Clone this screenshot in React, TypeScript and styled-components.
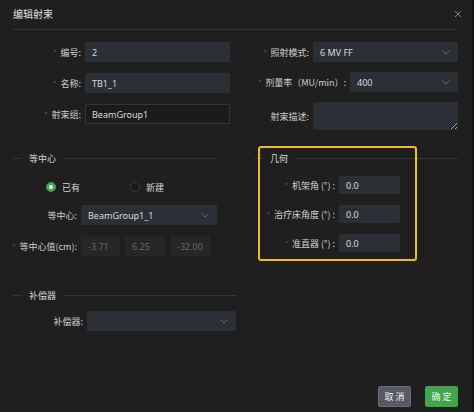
import React from "react";
import styled, { createGlobalStyle } from "styled-components";

const Global = createGlobalStyle`
  html, body { margin: 0; padding: 0; background: #1f1f1f; }
  body { font-family: "Noto Sans", "Noto Sans CJK SC", sans-serif; }
  * { box-sizing: border-box; }
`;

const Page = styled.div`
  display: flex;
  width: 474px;
  height: 412px;
`;

const Dialog = styled.div`
  position: relative;
  width: 472px;
  height: 412px;
  background: #1f1f1f;
  display: flex;
  flex-direction: column;
  color: #d4d4d4;
  font-size: 9px;
`;

const Edge = styled.div`
  width: 2px;
  background: #121212;
`;

const Header = styled.div`
  display: flex;
  align-items: center;
  justify-content: space-between;
  height: 30px;
  margin: 0 16px 0 13px;
  padding-bottom: 2px;
  border-bottom: 1px solid #343434;
`;

const Title = styled.div`
  font-size: 10px;
  color: #e0e0e0;
`;

const Close = styled.div`
  width: 8px;
  height: 8px;
  margin-right: -6px;
  display: flex;
`;

const TopGrid = styled.div`
  display: grid;
  grid-template-columns: 224px 221px;
  margin: 12px 0 0 13px;
`;

const Column = styled.div<{ $gap: number }>`
  display: flex;
  flex-direction: column;
  gap: ${(p) => p.$gap}px;
`;

const Row = styled.div<{ $labelW: number; $fieldW: number }>`
  display: grid;
  grid-template-columns: ${(p) => p.$labelW}px ${(p) => p.$fieldW}px;
  column-gap: 4px;
  align-items: center;
`;

const Label = styled.div`
  display: flex;
  justify-content: flex-end;
  align-items: center;
  color: #d0d0d0;
  white-space: nowrap;
  font-family: "Noto Sans CJK SC", sans-serif;
`;

const Star = styled.span`
  color: #c8302c;
  font-size: 7px;
  margin-right: 4px;
  flex-shrink: 0;
`;

const Field = styled.div<{ $h?: number; $variant?: "fill" | "line" | "off" }>`
  height: ${(p) => p.$h ?? 20}px;
  display: flex;
  align-items: center;
  justify-content: space-between;
  padding: 0 7px 0 6px;
  border-radius: 1px;
  background: ${(p) =>
    p.$variant === "line" ? "#1b1b1b" : p.$variant === "off" ? "#262626" : "#2b2f36"};
  border: 1px solid ${(p) => (p.$variant === "line" ? "#333638" : "transparent")};
  color: ${(p) => (p.$variant === "off" ? "#6a6a6a" : "#dcdcdc")};
  font-family: "Noto Sans", sans-serif;
  font-size: 9px;
`;

const Area = styled.textarea`
  height: 28px;
  width: 145px;
  background: #2b2f36;
  border: none;
  border-radius: 1px;
  margin: 0;
  outline: none;
  resize: vertical;
  display: block;
`;

const Middle = styled.div`
  display: grid;
  grid-template-columns: 204px 204px;
  column-gap: 37px;
  margin: 21px 0 0 13px;
`;

const Section = styled.div`
  position: relative;
  display: flex;
  flex-direction: column;
`;

const SectionTitle = styled.div`
  display: flex;
  align-items: center;
  height: 14px;
  gap: 7px;
  color: #d8d8d8;
  font-family: "Noto Sans CJK SC", sans-serif;
  &::before {
    content: "";
    width: 9px;
    height: 1px;
    background: #353535;
  }
  &::after {
    content: "";
    flex: 1;
    height: 1px;
    background: #353535;
  }
`;

const Stack = styled.div<{ $gap: number; $top: number }>`
  display: flex;
  flex-direction: column;
  gap: ${(p) => p.$gap}px;
  margin-top: ${(p) => p.$top}px;
`;

const Radios = styled.div`
  display: flex;
  align-items: center;
  height: 14px;
  padding-left: 33px;
  gap: 50px;
`;

const Radio = styled.label`
  display: flex;
  align-items: center;
  gap: 6px;
  font-family: "Noto Sans CJK SC", sans-serif;
  color: #d6d6d6;
`;

const Dot = styled.span<{ $on?: boolean }>`
  width: 10px;
  height: 10px;
  border-radius: 50%;
  background: ${(p) => (p.$on ? "#3fa64b" : "#1a1a1a")};
  border: 1px solid ${(p) => (p.$on ? "#3fa64b" : "#3a3a3a")};
  display: flex;
  align-items: center;
  justify-content: center;
  &::after {
    content: "";
    width: 4px;
    height: 4px;
    border-radius: 50%;
    background: ${(p) => (p.$on ? "#fff" : "transparent")};
  }
`;

const Triple = styled.div`
  display: grid;
  grid-template-columns: 39px 40px 40px;
  column-gap: 5px;
`;

const Highlight = styled.div`
  position: absolute;
  left: 4px;
  top: -5px;
  width: 159px;
  height: 115px;
  border: 2px solid #f2c00a;
  border-radius: 3px;
  pointer-events: none;
`;

const Comp = styled.div`
  width: 224px;
  margin: 32px 0 0 13px;
  display: flex;
  flex-direction: column;
`;

const Footer = styled.div`
  margin-top: auto;
  display: flex;
  justify-content: flex-end;
  gap: 14px;
  padding: 0 14px 5px 0;
`;

const Button = styled.button<{ $primary?: boolean }>`
  width: 33px;
  height: 21px;
  padding: 0;
  border-radius: 2px;
  border: 1px solid ${(p) => (p.$primary ? "#3fa64b" : "#6a6e78")};
  background: ${(p) => (p.$primary ? "#3fa64b" : "#565a65")};
  color: #f2f2f2;
  font-family: "Noto Sans CJK SC", sans-serif;
  font-size: 9px;
  letter-spacing: 2px;
  text-indent: 2px;
`;

const Chevron = () => (
  <svg width="8" height="5" viewBox="0 0 8 5" fill="none">
    <path d="M0.5 0.5 L4 4 L7.5 0.5" stroke="#6f737a" strokeWidth="0.9" />
  </svg>
);

const Req = ({ children }: { children: React.ReactNode }) => (
  <Label>
    <Star>*</Star>
    {children}
  </Label>
);

export default function App() {
  return (
    <Page>
      <Global />
      <Dialog>
        <Header>
          <Title>编辑射束</Title>
          <Close>
            <svg width="8" height="8" viewBox="0 0 8 8">
              <path d="M1 1 L7 7 M7 1 L1 7" stroke="#8a8a8a" strokeWidth="1" />
            </svg>
          </Close>
        </Header>

        <TopGrid>
          <Column $gap={11}>
            <Row $labelW={68} $fieldW={145}>
              <Req>编号:</Req>
              <Field>2</Field>
            </Row>
            <Row $labelW={68} $fieldW={145}>
              <Req>名称:</Req>
              <Field>TB1_1</Field>
            </Row>
            <Row $labelW={68} $fieldW={145}>
              <Req>射束组:</Req>
              <Field $variant="line">BeamGroup1</Field>
            </Row>
          </Column>
          <Column $gap={10}>
            <Row $labelW={72} $fieldW={145}>
              <Req>照射模式:</Req>
              <Field>
                6 MV FF <Chevron />
              </Field>
            </Row>
            <Row $labelW={109} $fieldW={108}>
              <Req>剂量率（MU/min）:</Req>
              <Field>
                400 <Chevron />
              </Field>
            </Row>
            <Row $labelW={72} $fieldW={145}>
              <Label>射束描述:</Label>
              <Area />
            </Row>
          </Column>
        </TopGrid>

        <Middle>
          <Section>
            <SectionTitle>等中心</SectionTitle>
            <Stack $gap={11} $top={15}>
              <Radios>
                <Radio>
                  <Dot $on />
                  已有
                </Radio>
                <Radio>
                  <Dot />
                  新建
                </Radio>
              </Radios>
              <Row $labelW={64} $fieldW={136}>
                <Label>等中心:</Label>
                <Field>
                  BeamGroup1_1 <Chevron />
                </Field>
              </Row>
              <Row $labelW={64} $fieldW={130}>
                <Req>等中心值(cm):</Req>
                <Triple>
                  <Field $variant="off">-3.71</Field>
                  <Field $variant="off">6.25</Field>
                  <Field $variant="off">-32.00</Field>
                </Triple>
              </Row>
            </Stack>
          </Section>

          <Section>
            <SectionTitle>几何</SectionTitle>
            <Stack $gap={11} $top={11}>
              <Row $labelW={81} $fieldW={61}>
                <Req>机架角 (°) :</Req>
                <Field $h={18}>0.0</Field>
              </Row>
              <Row $labelW={81} $fieldW={61}>
                <Req>治疗床角度 (°) :</Req>
                <Field $h={18}>0.0</Field>
              </Row>
              <Row $labelW={81} $fieldW={61}>
                <Req>准直器 (°) :</Req>
                <Field $h={18}>0.0</Field>
              </Row>
            </Stack>
            <Highlight />
          </Section>
        </Middle>

        <Comp>
          <SectionTitle>补偿器</SectionTitle>
          <Stack $gap={0} $top={9}>
            <Row $labelW={70} $fieldW={149}>
              <Label>补偿器:</Label>
              <Field>
                <span />
                <Chevron />
              </Field>
            </Row>
          </Stack>
        </Comp>

        <Footer>
          <Button>取消</Button>
          <Button $primary>确定</Button>
        </Footer>
      </Dialog>
      <Edge />
    </Page>
  );
}
